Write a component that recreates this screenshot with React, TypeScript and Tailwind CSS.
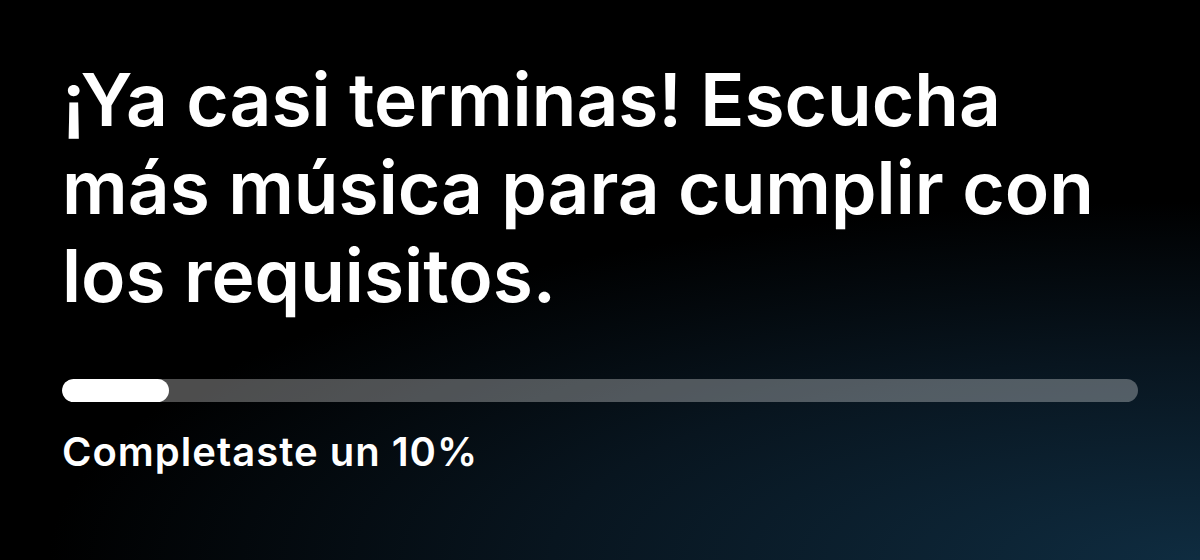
import React from "react";

export default function App() {
  return (
    <div
      className="w-[1200px] h-[560px] overflow-hidden bg-black bg-[radial-gradient(ellipse_120%_80%_at_100%_100%,#0f2c40_0%,#08151f_45%,#000000_80%)] text-white"
      style={{ fontFamily: "Inter, 'Noto Sans', sans-serif" }}
    >
      <div className="flex flex-col pl-[62px] pr-[62px] pt-[56px]">
        <h1 className="text-[73px] font-semibold leading-[88px] w-[1080px]">
          ¡Ya casi terminas! Escucha más música para cumplir con los requisitos.
        </h1>
        <div className="mt-[59px] h-[23px] w-[1076px] rounded-full bg-white/30 overflow-hidden">
          <div className="h-full w-[107px] rounded-full bg-white" />
        </div>
        <div className="mt-[27px] text-[40px] font-semibold leading-[46px] tracking-[1px]">
          Completaste un 10%
        </div>
      </div>
    </div>
  );
}
